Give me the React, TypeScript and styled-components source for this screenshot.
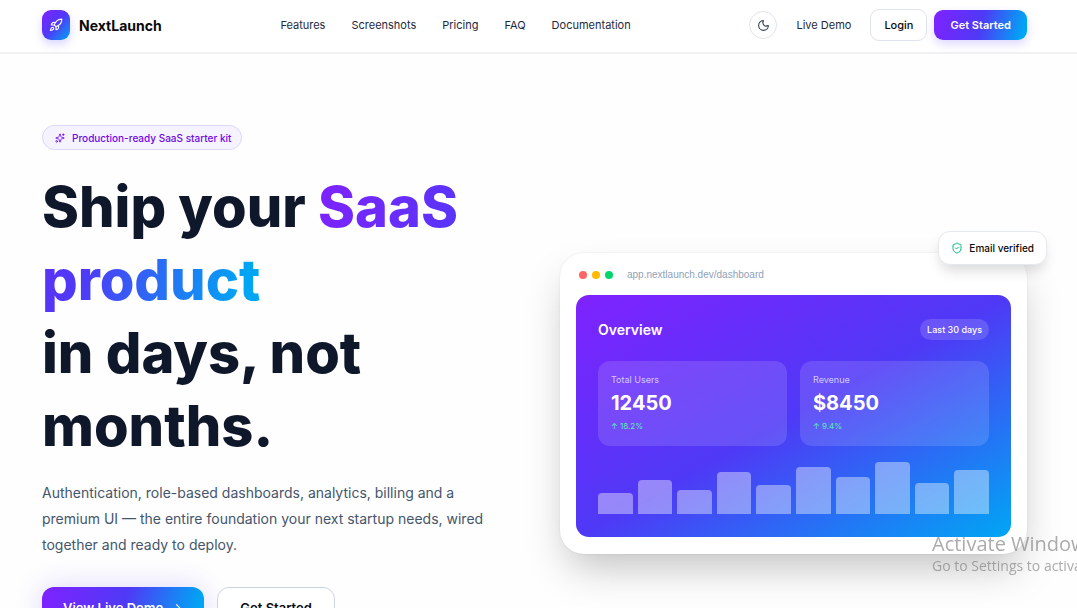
import React from "react";
import styled, { createGlobalStyle } from "styled-components";
import { ArrowRight, Moon, Rocket, ShieldCheck, Sparkles } from "lucide-react";

const brand = "linear-gradient(to bottom right, #7f22fe 0%, #4f39f6 50%, #00a6f4 100%)";
const brandWide = "linear-gradient(105deg, #7f22fe 0%, #4f39f6 50%, #00a6f4 94%)";

const GlobalStyle = createGlobalStyle`
  *, *::before, *::after { box-sizing: border-box; }
  html, body { margin: 0; padding: 0; }
  body {
    background: #fefefe;
    color: #0f172b;
    font-family: Inter, "Liberation Sans", sans-serif;
  }
  h1, h2, p, dl, dt, dd { margin: 0; }
  button { font-family: inherit; cursor: pointer; }
  a { color: inherit; text-decoration: none; }
`;

const Page = styled.div`
  height: 100vh;
  overflow: hidden;
`;

const Header = styled.header`
  display: flex;
  align-items: center;
  justify-content: space-between;
  height: 54px;
  padding: 0 50px 2px 42px;
  border-bottom: 2px solid #eff1f3;
  background: #fff;
`;

const Brand = styled.a`
  display: flex;
  align-items: center;
  gap: 9px;
  color: #0a0a0a;
  font-size: 14px;
  font-weight: 700;
`;

const LogoMark = styled.span`
  display: grid;
  place-items: center;
  width: 28px;
  height: 30px;
  border-radius: 9px;
  background: ${brand};
  color: #fff;
  box-shadow: 0 4px 8px rgba(79, 57, 246, 0.22);
`;

const Nav = styled.nav`
  display: flex;
  gap: 26px;
  color: #1d293d;
  font-size: 11px;
  font-weight: 400;
`;

const Actions = styled.div`
  display: flex;
  align-items: center;
`;

const ThemeButton = styled.button`
  display: grid;
  place-items: center;
  width: 28px;
  height: 28px;
  margin-right: 19px;
  padding: 0;
  border: 1px solid #dfe4ec;
  border-radius: 50%;
  background: #fff;
  color: #314158;
`;

const TextLink = styled.a`
  margin-right: 19px;
  color: #1d293d;
  font-size: 11px;
  font-weight: 400;
`;

const Button = styled.button<{ $primary?: boolean; $large?: boolean }>`
  display: inline-flex;
  align-items: center;
  justify-content: center;
  gap: 7px;
  height: ${(p) => (p.$large ? 42 : p.$primary ? 30 : 32)}px;
  padding: 0 ${(p) => (p.$large ? (p.$primary ? 21 : 22) : p.$primary ? 16 : 13)}px;
  border: ${(p) => (p.$primary ? "0" : p.$large ? "1px solid #cad5e2" : "1px solid #dfe3ee")};
  border-radius: ${(p) => (p.$large ? 12 : 9)}px;
  background: ${(p) => (p.$primary ? brandWide : "#fff")};
  color: ${(p) => (p.$primary ? "#fff" : "#0a0a0a")};
  font-size: ${(p) => (p.$large ? 13 : 11)}px;
  font-weight: ${(p) => (p.$primary || p.$large ? 600 : 500)};
  box-shadow: ${(p) =>
    p.$primary ? (p.$large ? "0 0 28px rgba(79, 57, 246, 0.2)" : "0 4px 10px rgba(79, 57, 246, 0.2)") : "none"};
`;

const HeaderButtons = styled.div`
  display: flex;
  align-items: center;
  gap: 7px;
`;

const Hero = styled.main`
  display: grid;
  grid-template-columns: minmax(0, 1fr) minmax(0, 1fr);
  column-gap: 51px;
  align-items: start;
  padding: 71px 50px 0 42px;
`;

const Pill = styled.p`
  display: flex;
  align-items: center;
  gap: 7px;
  width: fit-content;
  height: 25px;
  padding: 0 10px 0 12px;
  border: 1px solid #ddd6ff;
  border-radius: 13px;
  background: #f5f3ff;
  color: #7008e7;
  font-size: 10px;
  font-weight: 500;
`;

const Title = styled.h1`
  margin-top: 21px;
  font-size: 56px;
  font-weight: 800;
  line-height: 73px;
`;

const Gradient = styled.span`
  background: ${brandWide};
  background-clip: text;
  -webkit-background-clip: text;
  color: transparent;
`;

const Lead = styled.p`
  margin-top: 17px;
  color: #45556c;
  font-size: 14px;
  line-height: 26px;
`;

const Cta = styled.div`
  display: flex;
  gap: 13px;
  margin-top: 29px;
`;

const Visual = styled.section`
  position: relative;
  margin-top: 128px;
`;

const Browser = styled.div`
  padding: 16px 16px 17px;
  border-radius: 24px;
  background: #fff;
  box-shadow: 0 0 2px rgba(0, 0, 0, 0.1), 0 20px 40px -8px rgba(0, 0, 0, 0.25);
`;

const AddressBar = styled.div`
  display: flex;
  align-items: center;
  gap: 5px;
  height: 12px;
  margin-bottom: 14px;
  padding-left: 3px;
`;

const Dot = styled.span<{ $color: string }>`
  width: 8px;
  height: 8px;
  border-radius: 50%;
  background: ${(p) => p.$color};
`;

const Url = styled.span`
  margin-left: 9px;
  color: #90a1b9;
  font-family: "Liberation Sans", Arial, sans-serif;
  font-size: 10px;
  line-height: 12px;
`;

const Dashboard = styled.div`
  padding: 22px 22px 23px;
  border-radius: 13px;
  background: ${brand};
  color: #fff;
`;

const DashHead = styled.div`
  display: flex;
  align-items: center;
  justify-content: space-between;
  height: 24px;
`;

const DashTitle = styled.h2`
  font-size: 14px;
  font-weight: 600;
`;

const Period = styled.span`
  padding: 0 7px;
  border-radius: 11px;
  background: rgba(255, 255, 255, 0.15);
  font-size: 9px;
  font-weight: 500;
  line-height: 21px;
`;

const Stats = styled.dl`
  display: grid;
  grid-template-columns: 1fr 1fr;
  gap: 13px;
  margin-top: 20px;
`;

const Stat = styled.div`
  height: 85px;
  padding: 12px 13px;
  border-radius: 12px;
  background: rgba(255, 255, 255, 0.13);
`;

const StatLabel = styled.dt`
  color: rgba(255, 255, 255, 0.7);
  font-size: 9px;
  line-height: 14px;
`;

const StatValue = styled.dd`
  font-size: 20px;
  font-weight: 700;
  line-height: 32px;
`;

const StatTrend = styled.dd`
  color: #5ee9b5;
  font-size: 8px;
  line-height: 14px;
`;

const Bars = styled.div`
  display: flex;
  align-items: flex-end;
  gap: 5px;
  height: 52px;
  margin-top: 16px;
`;

const Bar = styled.span`
  flex: 1;
  border-radius: 4px 4px 0 0;
  background: rgba(255, 255, 255, 0.4);
`;

const Toast = styled.div`
  position: absolute;
  top: -22px;
  right: -20px;
  display: flex;
  align-items: center;
  gap: 6px;
  height: 34px;
  padding: 0 12px;
  border: 1px solid #e5e9ee;
  border-radius: 12px;
  background: #fff;
  color: #0a0a0a;
  font-size: 10px;
  font-weight: 500;
  white-space: nowrap;
  box-shadow: 0 8px 14px -3px rgba(0, 0, 0, 0.16);
`;

const SystemNotice = styled.aside`
  position: fixed;
  top: 531px;
  left: calc(100% - 145px);
  color: rgba(120, 120, 120, 0.62);
  font-family: "Open Sans", "Noto Sans", sans-serif;
  font-size: 14px;
  line-height: 20px;
  white-space: nowrap;
`;

const NoticeTitle = styled.p`
  font-size: 20px;
  font-weight: 400;
  line-height: 25px;
`;

const links = ["Features", "Screenshots", "Pricing", "FAQ", "Documentation"];
const stats = [
  { label: "Total Users", value: "12450", trend: "↑ 18.2%" },
  { label: "Revenue", value: "$8450", trend: "↑ 9.4%" },
];
const bars = [40, 65, 46, 81, 55, 91, 71, 100, 60, 85];

export default function App() {
  return (
    <Page>
      <GlobalStyle />
      <Header>
        <Brand href="#">
          <LogoMark>
            <Rocket size={14} />
          </LogoMark>
          NextLaunch
        </Brand>
        <Nav>
          {links.map((l) => (
            <a key={l} href={`#${l.toLowerCase()}`}>
              {l}
            </a>
          ))}
        </Nav>
        <Actions>
          <ThemeButton aria-label="Toggle theme">
            <Moon size={13} />
          </ThemeButton>
          <TextLink href="#demo">Live Demo</TextLink>
          <HeaderButtons>
            <Button>Login</Button>
            <Button $primary>Get Started</Button>
          </HeaderButtons>
        </Actions>
      </Header>
      <Hero>
        <div>
          <Pill>
            <Sparkles size={10} />
            Production-ready SaaS starter kit
          </Pill>
          <Title>
            Ship your <Gradient>SaaS product</Gradient>
            <br />
            in days, not months.
          </Title>
          <Lead>
            Authentication, role-based dashboards, analytics, billing and a premium UI — the entire foundation your
            next startup needs, wired together and ready to deploy.
          </Lead>
          <Cta>
            <Button $primary $large>
              View Live Demo
              <ArrowRight size={13} />
            </Button>
            <Button $large>Get Started</Button>
          </Cta>
        </div>
        <Visual>
          <Browser>
            <AddressBar>
              <Dot $color="#ff6467" />
              <Dot $color="#ffb900" />
              <Dot $color="#00d66b" />
              <Url>app.nextlaunch.dev/dashboard</Url>
            </AddressBar>
            <Dashboard>
              <DashHead>
                <DashTitle>Overview</DashTitle>
                <Period>Last 30 days</Period>
              </DashHead>
              <Stats>
                {stats.map((s) => (
                  <Stat key={s.label}>
                    <StatLabel>{s.label}</StatLabel>
                    <StatValue>{s.value}</StatValue>
                    <StatTrend>{s.trend}</StatTrend>
                  </Stat>
                ))}
              </Stats>
              <Bars>
                {bars.map((h, i) => (
                  <Bar key={i} style={{ height: `${h}%` }} />
                ))}
              </Bars>
            </Dashboard>
          </Browser>
          <Toast>
            <ShieldCheck size={12} color="#00bc7d" />
            Email verified
          </Toast>
        </Visual>
      </Hero>
      <SystemNotice>
        <NoticeTitle>Activate Windows</NoticeTitle>
        <p>Go to Settings to activate Windows.</p>
      </SystemNotice>
    </Page>
  );
}
